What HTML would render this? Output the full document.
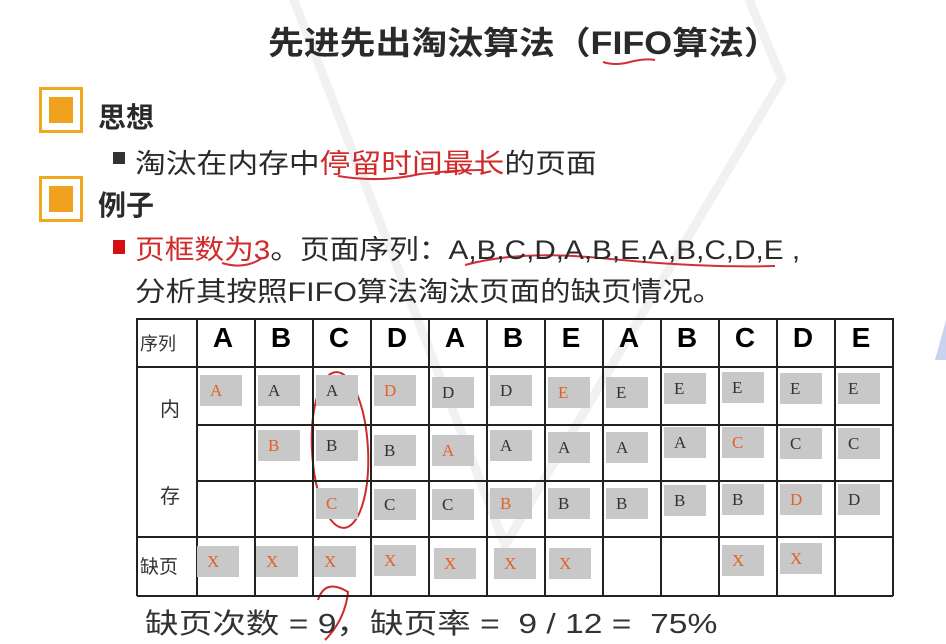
<!DOCTYPE html>
<html><head><meta charset="utf-8"><style>
body{margin:0;width:946px;height:644px;background:#fff;position:relative;overflow:hidden;font-family:"Liberation Sans","Noto Sans CJK SC",sans-serif;color:#2a2a2a}
.a{position:absolute}
.s{transform-origin:0 0;white-space:nowrap}
.ob{position:absolute;left:39px;width:38px;height:40px;border:3px solid #f1a81e;background:#fff}
.ob i{position:absolute;left:7px;top:7px;width:24px;height:26px;background:#f0a21e}
.v{position:absolute;top:318px;height:278px;width:2px;background:#222}
.h{position:absolute;left:137px;width:756px;height:2px;background:#222}
.hd{position:absolute;top:322px;width:52px;text-align:center;font:bold 28px "Liberation Sans",sans-serif;color:#000}
.b{position:absolute;width:42px;height:31px;background:#c8c8c8;font:17px "Liberation Serif",serif;color:#333;text-indent:10px;line-height:31px}
.o{color:#e2622a}
.lb{position:absolute;font-size:20px;color:#333}
</style></head><body>
<svg class="a" style="left:0;top:0" width="946" height="644">
<polyline points="290,-10 505,545 782,79 745,-10" fill="none" stroke="#f1f1f1" stroke-width="9"/>
<polygon points="935,360 946,320 946,360" fill="#c9d3ef"/>
<path d="M603 62 Q615 66 630 62 Q645 58 655 60" stroke="#d0303a" stroke-width="2" fill="none"/>
<path d="M338 176 Q380 183 420 174 Q455 170 482 170" stroke="#d0303a" stroke-width="2" fill="none"/>
<path d="M222 263 Q245 270 262 258" stroke="#d0303a" stroke-width="2" fill="none"/>
<path d="M465 265 Q520 250 600 258 Q700 268 775 266" stroke="#d0303a" stroke-width="2" fill="none"/>
<ellipse cx="340" cy="450" rx="28" ry="78" stroke="#cf2a2a" stroke-width="2" fill="none" transform="rotate(-3 340 450)"/>
<path d="M318 600 Q325 578 348 592 Q345 620 325 640" stroke="#cf2a2a" stroke-width="2" fill="none"/>
</svg>
<div class="a s" style="left:268px;top:18px;font-weight:bold;font-size:32px;color:#2a2a2a;transform:scaleX(1.12)">先进先出淘汰算法（FIFO算法）</div>
<div class="ob" style="top:87px"><i></i></div>
<div class="ob" style="top:176px"><i></i></div>
<div class="a" style="left:98px;top:96px;font-weight:bold;font-size:28px">思想</div>
<div class="a" style="left:98px;top:184px;font-weight:bold;font-size:28px">例子</div>
<div class="a" style="left:113px;top:152px;width:12px;height:12px;background:#333"></div>
<div class="a s" style="left:135px;top:142px;font-size:27px;transform:scaleX(1.14)">淘汰在内存中<span style="color:#d02a2a">停留时间最长</span>的页面</div>
<div class="a" style="left:113px;top:240px;width:12px;height:14px;background:#d40f0f"></div>
<div class="a s" style="left:135px;top:228px;font-size:27px;transform:scaleX(1.1)"><span style="color:#d02a2a">页框数为3</span>。页面序列：A,B,C,D,A,B,E,A,B,C,D,E ,</div>
<div class="a s" style="left:135px;top:270px;font-size:27px;transform:scaleX(1.13)">分析其按照FIFO算法淘汰页面的缺页情况。</div>
<div class="h" style="top:318px"></div><div class="h" style="top:366px"></div><div class="h" style="top:536px"></div><div class="h" style="top:595px"></div>
<div class="h" style="top:424px;left:197px;width:696px"></div><div class="h" style="top:480px;left:197px;width:696px"></div>
<div class="v" style="left:136px"></div><div class="v" style="left:196px"></div><div class="v" style="left:254px"></div><div class="v" style="left:312px"></div><div class="v" style="left:370px"></div><div class="v" style="left:428px"></div><div class="v" style="left:486px"></div><div class="v" style="left:544px"></div><div class="v" style="left:602px"></div><div class="v" style="left:660px"></div><div class="v" style="left:718px"></div><div class="v" style="left:776px"></div><div class="v" style="left:834px"></div><div class="v" style="left:892px"></div>
<div class="lb" style="left:140px;top:330px;font-size:18px">序列</div>
<div class="lb" style="left:160px;top:393px">内</div>
<div class="lb" style="left:160px;top:480px">存</div>
<div class="lb" style="left:140px;top:552px;font-size:19px">缺页</div>
<div class="hd" style="left:197px">A</div><div class="hd" style="left:255px">B</div><div class="hd" style="left:313px">C</div><div class="hd" style="left:371px">D</div><div class="hd" style="left:429px">A</div><div class="hd" style="left:487px">B</div><div class="hd" style="left:545px">E</div><div class="hd" style="left:603px">A</div><div class="hd" style="left:661px">B</div><div class="hd" style="left:719px">C</div><div class="hd" style="left:777px">D</div><div class="hd" style="left:835px">E</div>
<div class="b o" style="left:200px;top:375px">A</div><div class="b" style="left:258px;top:375px">A</div><div class="b" style="left:316px;top:375px">A</div><div class="b o" style="left:374px;top:375px">D</div><div class="b" style="left:432px;top:377px">D</div><div class="b" style="left:490px;top:375px">D</div><div class="b o" style="left:548px;top:377px">E</div><div class="b" style="left:606px;top:377px">E</div><div class="b" style="left:664px;top:373px">E</div><div class="b" style="left:722px;top:372px">E</div><div class="b" style="left:780px;top:373px">E</div><div class="b" style="left:838px;top:373px">E</div>
<div class="b o" style="left:258px;top:430px">B</div><div class="b" style="left:316px;top:430px">B</div><div class="b" style="left:374px;top:435px">B</div><div class="b o" style="left:432px;top:435px">A</div><div class="b" style="left:490px;top:430px">A</div><div class="b" style="left:548px;top:432px">A</div><div class="b" style="left:606px;top:432px">A</div><div class="b" style="left:664px;top:427px">A</div><div class="b o" style="left:722px;top:427px">C</div><div class="b" style="left:780px;top:428px">C</div><div class="b" style="left:838px;top:428px">C</div>
<div class="b o" style="left:316px;top:488px">C</div><div class="b" style="left:374px;top:489px">C</div><div class="b" style="left:432px;top:489px">C</div><div class="b o" style="left:490px;top:488px">B</div><div class="b" style="left:548px;top:488px">B</div><div class="b" style="left:606px;top:488px">B</div><div class="b" style="left:664px;top:485px">B</div><div class="b" style="left:722px;top:484px">B</div><div class="b o" style="left:780px;top:484px">D</div><div class="b" style="left:838px;top:484px">D</div>
<div class="b o" style="left:197px;top:546px">X</div><div class="b o" style="left:256px;top:546px">X</div><div class="b o" style="left:314px;top:546px">X</div><div class="b o" style="left:374px;top:545px">X</div><div class="b o" style="left:434px;top:548px">X</div><div class="b o" style="left:494px;top:548px">X</div><div class="b o" style="left:549px;top:548px">X</div><div class="b o" style="left:722px;top:545px">X</div><div class="b o" style="left:780px;top:543px">X</div>
<div class="a s" style="left:145px;top:602px;font-size:28px;color:#333;white-space:pre;transform:scaleX(1.2)">缺页次数 = 9，缺页率 =  9 / 12 =  75%</div>
</body></html>
